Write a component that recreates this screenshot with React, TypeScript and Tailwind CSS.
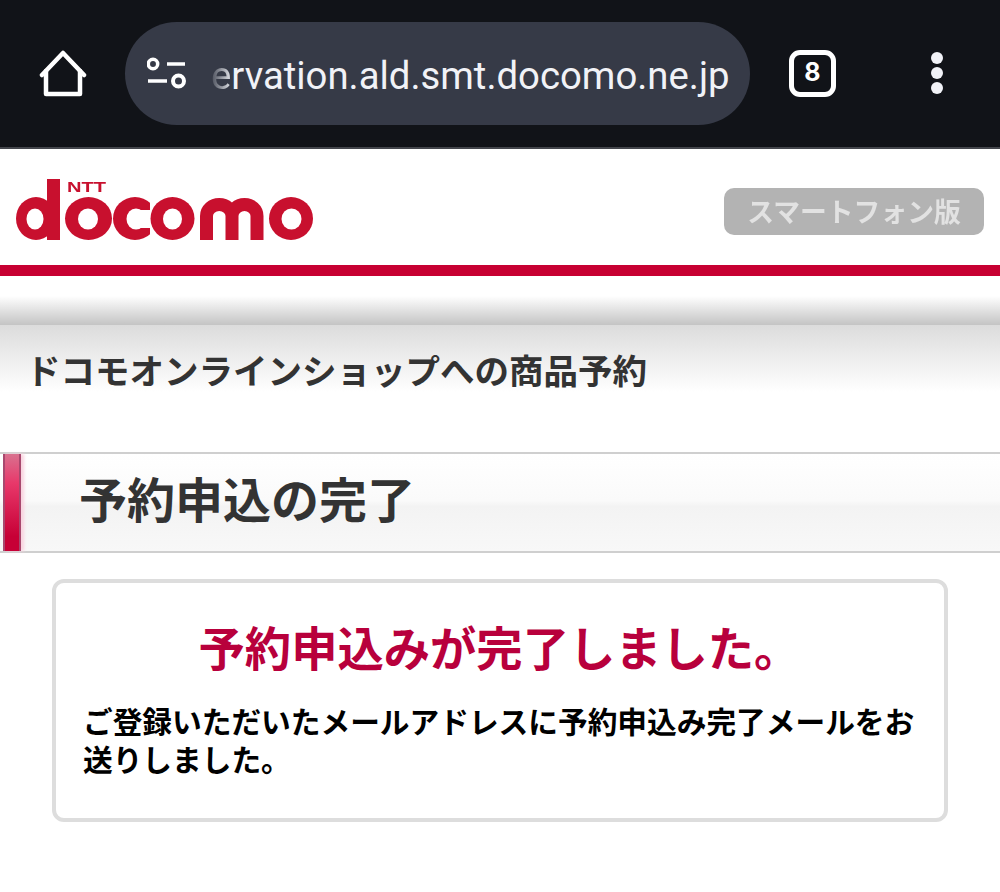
import React from 'react';

const jp = 'font-["Noto_Sans_CJK_JP","Noto_Sans",sans-serif]';

function HomeIcon() {
  return (
    <svg width="48" height="48" viewBox="0 0 48 48" fill="none" stroke="#fff" strokeWidth="4.5" strokeLinejoin="round" strokeLinecap="round">
      <path d="M3 26 L24 4 L45 26" />
      <path d="M7 22 V45 H41 V22" />
    </svg>
  );
}

function TuneIcon() {
  return (
    <svg width="40" height="34" viewBox="0 0 40 34" fill="none" stroke="#fff" strokeWidth="3.500">
      <circle cx="6" cy="8" r="4.700" />
      <path d="M20 8 H38" />
      <path d="M1 25 H20" />
      <circle cx="31.500" cy="25" r="5.500" strokeWidth="4" />
    </svg>
  );
}

function DocomoLogo() {
  const red = '#c8102e';
  return (
    <svg width="300" height="64" viewBox="0 0 300 64" fill="none" className="mt-[6px] blur-[0.6px]">
      {/* d */}
      <ellipse cx="21" cy="40.500" rx="20" ry="21.500" fill={red} />
      <rect x="32" y="1" width="13" height="61" fill={red} />
      <ellipse cx="20" cy="41" rx="8.500" ry="10.500" fill="#fff" />
      {/* o */}
      <ellipse cx="73.500" cy="40.500" rx="23.500" ry="21.500" fill={red} />
      <ellipse cx="73" cy="41" rx="10" ry="10.500" fill="#fff" />
      {/* c */}
      <ellipse cx="120" cy="40.500" rx="22" ry="21.500" fill={red} />
      <ellipse cx="121" cy="41" rx="9.500" ry="10.500" fill="#fff" />
      <rect x="121" y="32" width="24" height="18" fill="#fff" />
      <rect x="135" y="15" width="10" height="50" fill="#fff" />
      {/* o */}
      <ellipse cx="157.500" cy="40.500" rx="22" ry="21.500" fill={red} />
      <ellipse cx="157.500" cy="41" rx="9.500" ry="10.500" fill="#fff" />
      {/* m */}
      <path d="M191.500 62 V38 A12.750 11.500 0 0 1 217 38 V62 M217 38 A12.500 11.500 0 0 1 242 38 V62" stroke={red} strokeWidth="13" />
      {/* o */}
      <ellipse cx="276" cy="40.500" rx="22" ry="21.500" fill={red} />
      <ellipse cx="276.500" cy="41" rx="10" ry="10.500" fill="#fff" />
      <text x="52" y="14" fontSize="15.500" fontWeight="700" fill={red} textLength="39" lengthAdjust="spacingAndGlyphs" fontFamily="'Liberation Sans',sans-serif">NTT</text>
    </svg>
  );
}

export default function App() {
  return (
    <div className={`w-[1000px] h-[892px] bg-white overflow-hidden ${jp}`}>
      <div className="h-[149px] bg-[#111318] border-b-2 border-[#44464c] flex items-center relative">
        <div className="w-[125px] flex justify-center pb-[2px]"><HomeIcon /></div>
        <div className="w-[625px] h-[103px] mb-[1px] rounded-[52px] bg-[#363a47] flex items-center pl-[22px]">
          <TuneIcon />
          <div className="ml-[24px] pt-[5px] w-[525px] overflow-hidden whitespace-nowrap text-[38.300px] text-[#f1f2f7] font-['Roboto',sans-serif]">
            <span className="bg-gradient-to-r from-[#4a4e5a] to-[#e4e5ea] bg-clip-text text-transparent">e</span>rvation.ald.smt.docomo.ne.jp
          </div>
        </div>
        <div className="ml-[39px] w-[47px] h-[47px] rounded-[11px] border-[5px] border-white flex items-center justify-center text-white text-[25px] font-bold font-['Inter',sans-serif] mb-[1px]">8</div>
        <div className="ml-[95px] flex flex-col gap-[3px] mb-[1px]">
          <span className="w-[12px] h-[12px] rounded-full bg-[#f1f2f7]" />
          <span className="w-[12px] h-[12px] rounded-full bg-[#f1f2f7]" />
          <span className="w-[12px] h-[12px] rounded-full bg-[#f1f2f7]" />
        </div>
      </div>

      <div className="h-[127px] flex items-center justify-between pl-[15px] pr-[16px] border-b-[11px] border-[#c70032]">
        <DocomoLogo />
        <div className="w-[260px] h-[47px] mt-[9px] rounded-[10px] bg-[#b3b3b3] flex items-center justify-center text-[26.800px] font-semibold text-[#e2e2e2] blur-[0.7px]">スマートフォン版</div>
      </div>

      <div className="h-[29px] mt-[20px] bg-gradient-to-b from-white to-[#c4c4c4]" />
      <div className="h-[67px] pt-[18px] pl-[26px] bg-gradient-to-b from-[#dcdcdc] to-white text-[34.500px] font-bold text-[#333] leading-[52px] whitespace-nowrap">
        ドコモオンラインショップへの商品予約
      </div>

      <div className="mt-[60px] h-[101px] border-y-2 border-[#cfcfcf] bg-[linear-gradient(#ffffff,#fafafa_48%,#f3f3f3_54%,#f8f8f8)] flex items-center">
        <div className="ml-[3px] w-[18px] h-full border-x-2 border-[#a8486e] bg-[linear-gradient(#d9718f,#e8386a_30%,#c70036_85%)] shadow-[3px_0_3px_#f9d3df]" />
        <div className="ml-[58px] pb-[12px] text-[48px] font-bold text-[#333] leading-none">予約申込の完了</div>
      </div>

      <div className="mt-[26px] mx-[52px] h-[243px] rounded-[12px] border-[4px] border-[#dddddd] pl-[27px] pr-[28px]">
        <div className="mt-[33px] text-center text-[46.300px] font-bold text-[#b8003c] leading-[60px]">予約申込みが完了しました。</div>
        <div className="mt-[26px] text-[29.700px] font-bold text-black leading-[38px]">ご登録いただいたメールアドレスに予約申込み完了メールをお送りしました。</div>
      </div>
    </div>
  );
}
